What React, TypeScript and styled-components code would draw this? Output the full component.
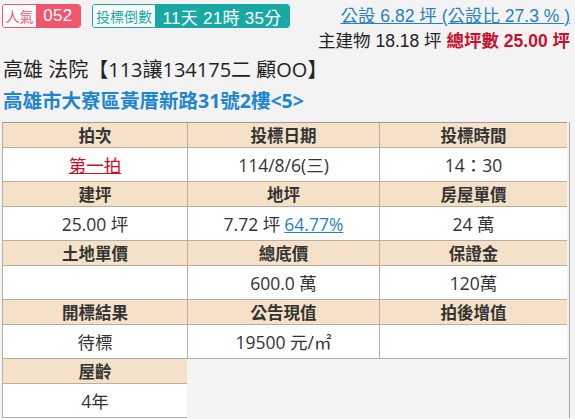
import React from "react";
import styled, { createGlobalStyle } from "styled-components";

const GlobalStyle = createGlobalStyle`
  html, body { margin: 0; padding: 0; background: #f3f3f3; }
  body { font-family: "Open Sans", "Noto Sans CJK TC", sans-serif; color: #333; }
`;

const Page = styled.div`
  padding: 0 0 0 2px;
  width: 568px;
`;

const TopBar = styled.div`
  display: flex;
  justify-content: space-between;
  align-items: flex-start;
  height: 56px;
`;

const Badges = styled.div`
  display: flex;
  gap: 11px;
  margin-top: 4px;
`;

const Badge = styled.div<{ $c: string }>`
  display: flex;
  height: 24px;
  box-sizing: border-box;
  border: 1px solid ${(p) => p.$c};
  border-radius: 3px;
  overflow: hidden;
  font-family: "Liberation Sans", "Noto Sans CJK TC", sans-serif;
`;

const BadgeLabel = styled.span<{ $c: string; $w: number }>`
  display: flex;
  align-items: center;
  justify-content: center;
  width: ${(p) => p.$w}px;
  background: #fff;
  color: ${(p) => p.$c};
  font-size: 14px;
`;

const BadgeValue = styled.span<{ $c: string; $w: number }>`
  display: flex;
  align-items: center;
  justify-content: center;
  width: ${(p) => p.$w}px;
  background: ${(p) => p.$c};
  color: #fff;
  font-size: 17px;
  letter-spacing: 0.3px;
`;

const Areas = styled.div`
  display: flex;
  flex-direction: column;
  align-items: flex-end;
  font-family: "Liberation Sans", "Noto Sans CJK TC", sans-serif;
  padding-top: 5px;
`;

const CommonArea = styled.a`
  color: #2a7fc0;
  font-size: 17.5px;
  line-height: 22px;
  text-decoration: underline;
`;

const AreaLine = styled.div`
  font-size: 17.5px;
  line-height: 24px;
  color: #222;
  margin-top: 2px;
`;

const Total = styled.b`
  color: #c8102e;
`;

const Title = styled.div`
  font-size: 20px;
  line-height: 28px;
  color: #222;
  padding-left: 1px;
`;

const Address = styled.div`
  font-size: 19.5px;
  line-height: 30px;
  font-weight: 700;
  color: #1e85d0;
  padding-left: 1px;
  margin-top: 2px;
`;

const TableWrap = styled.div`
  margin-top: 6px;
  padding-right: 2px;
  border-right: 1px solid #a9a9a9;
`;

const Grid = styled.div`
  display: grid;
  grid-template-columns: 185px 192px 188px;
  border-top: 1px solid #a89a8a;
`;

const Cell = styled.div<{ $head?: boolean; $empty?: boolean }>`
  box-sizing: border-box;
  height: ${(p) => (p.$head ? 25 : 34)}px;
  display: flex;
  align-items: center;
  justify-content: center;
  background: ${(p) => (p.$empty ? "transparent" : p.$head ? "#f5e1c8" : "#fff")};
  border-bottom: ${(p) => (p.$empty ? "none" : "1px solid #b9ada0")};
  border-left: ${(p) => (p.$empty ? "none" : "1px solid #b9ada0")};
  font-size: ${(p) => (p.$head ? 16.5 : 17.5)}px;
  font-weight: ${(p) => (p.$head ? 700 : 400)};
  color: #333;
`;

const RedLink = styled.a`
  color: #c8102e;
  text-decoration: underline;
`;

const BlueLink = styled.a`
  color: #2a7fc0;
  text-decoration: underline;
  margin-left: 4px;
`;

type Pair = { head: string; value?: React.ReactNode } | null;

const rows: Pair[][] = [
  [
    { head: "拍次", value: <RedLink>第一拍</RedLink> },
    { head: "投標日期", value: "114/8/6(三)" },
    { head: "投標時間", value: "14：30" },
  ],
  [
    { head: "建坪", value: "25.00 坪" },
    {
      head: "地坪",
      value: (
        <>
          7.72 坪<BlueLink>64.77%</BlueLink>
        </>
      ),
    },
    { head: "房屋單價", value: "24 萬" },
  ],
  [
    { head: "土地單價", value: "" },
    { head: "總底價", value: "600.0 萬" },
    { head: "保證金", value: "120萬" },
  ],
  [
    { head: "開標結果", value: "待標" },
    { head: "公告現值", value: "19500 元/㎡" },
    { head: "拍後增值", value: "" },
  ],
  [{ head: "屋齡", value: "4年" }, null, null],
];

export default function App() {
  return (
    <>
      <GlobalStyle />
      <Page>
        <TopBar>
          <Badges>
            <Badge $c="#f2566f">
              <BadgeLabel $c="#f2566f" $w={33}>人氣</BadgeLabel>
              <BadgeValue $c="#f2566f" $w={44}>052</BadgeValue>
            </Badge>
            <Badge $c="#18a9a5">
              <BadgeLabel $c="#18a9a5" $w={62}>投標倒數</BadgeLabel>
              <BadgeValue $c="#18a9a5" $w={134}>11天 21時 35分</BadgeValue>
            </Badge>
          </Badges>
          <Areas>
            <CommonArea>公設 6.82 坪 (公設比 27.3 % )</CommonArea>
            <AreaLine>
              主建物 18.18 坪 <Total>總坪數 25.00 坪</Total>
            </AreaLine>
          </Areas>
        </TopBar>
        <Title>高雄 法院【113讓134175二 顧OO】</Title>
        <Address>高雄市大寮區黃厝新路31號2樓&lt;5&gt;</Address>
        <TableWrap>
          <Grid>
            {rows.map((row, ri) => (
              <React.Fragment key={ri}>
                {row.map((c, ci) => (
                  <Cell key={"h" + ci} $head $empty={!c}>
                    {c ? c.head : null}
                  </Cell>
                ))}
                {row.map((c, ci) => (
                  <Cell key={"v" + ci} $empty={!c}>
                    {c ? c.value : null}
                  </Cell>
                ))}
              </React.Fragment>
            ))}
          </Grid>
        </TableWrap>
      </Page>
    </>
  );
}
